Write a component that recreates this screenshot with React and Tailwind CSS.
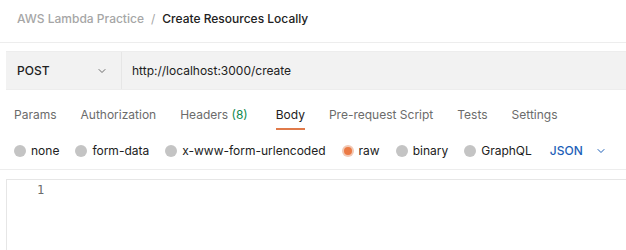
import React from "react";

function Chevron({ className = "" }) {
  return (
    <svg width="10" height="10" viewBox="0 0 10 10" className={className} fill="none">
      <path d="M2 3.5 L5 6.5 L8 3.5" stroke="currentColor" strokeWidth="1" strokeLinecap="round" strokeLinejoin="round" />
    </svg>
  );
}

function Radio({ label, active }) {
  return (
    <div className="flex items-center gap-[5px] whitespace-nowrap">
      {active ? (
        <span className="w-[12px] h-[12px] rounded-full bg-[#f2c9b5] flex items-center justify-center">
          <span className="w-[8px] h-[8px] rounded-full bg-[#eb7a45]" />
        </span>
      ) : (
        <span className="w-[12px] h-[12px] rounded-full bg-[#c4c4c4]" />
      )}
      <span className="text-[#212121]">{label}</span>
    </div>
  );
}

export default function App() {
  const tabs = ["Params", "Authorization", "Headers", "Body", "Pre-request Script", "Tests", "Settings"];
  return (
    <div className="w-[626px] h-[250px] bg-white overflow-hidden" style={{ fontFamily: "Inter, 'Noto Sans', sans-serif" }}>
      <div className="h-[43px] flex items-center pl-[17px] pb-[5px] text-[12px] border-b border-[#ededed] whitespace-nowrap">
        <span className="text-[#a6a6a6] font-medium">AWS Lambda Practice</span>
        <span className="text-[#a6a6a6] mx-[7px]">/</span>
        <span className="text-[#212121] font-medium">Create Resources Locally</span>
      </div>
      <div className="mt-[8px] ml-[6px] h-[39px] flex bg-[#f2f2f2] border-y border-[#ededed] text-[12px]">
        <div className="w-[116px] flex items-center justify-between pl-[11px] pr-[14px] border-r border-[#e6e6e6]">
          <span className="font-medium text-[#212121]">POST</span>
          <Chevron className="text-[#6b6b6b]" />
        </div>
        <div className="flex items-center pl-[10px] text-[#212121]">http://localhost:3000/create</div>
      </div>
      <div className="flex gap-[24px] pl-[14px] mt-[17px] h-[25px] text-[12px] leading-[16px] text-[#6b6b6b] whitespace-nowrap">
        {tabs.map((t) => (
          <div key={t} className={"relative " + (t === "Body" ? "text-[#212121] ml-[4px]" : "")}>
            {t}
            {t === "Headers" && <span className="text-[#0f8a4f]"> (8)</span>}
            {t === "Body" && <div className="absolute left-0 right-0 top-[21px] h-[2px] bg-[#e07a4a]" />}
          </div>
        ))}
      </div>
      <div className="flex items-center gap-[16px] pl-[14px] h-[38px] text-[12px] border-b border-[#ededed]">
        <Radio label="none" />
        <Radio label="form-data" />
        <Radio label="x-www-form-urlencoded" />
        <Radio label="raw" active />
        <Radio label="binary" />
        <Radio label="GraphQL" />
        <div className="flex items-center gap-[13px] ml-[2px]">
          <span className="text-[#1d5fb8] font-medium">JSON</span>
          <Chevron className="text-[#1d5fb8]" />
        </div>
      </div>
      <div className="mt-[9px] ml-[6px] border-t border-l border-[#e6e6e6] h-[80px]">
        <div className="pl-[30px] pt-[1px] text-[12px] text-[#6b6b6b]" style={{ fontFamily: "'DejaVu Sans Mono', monospace" }}>1</div>
      </div>
    </div>
  );
}
